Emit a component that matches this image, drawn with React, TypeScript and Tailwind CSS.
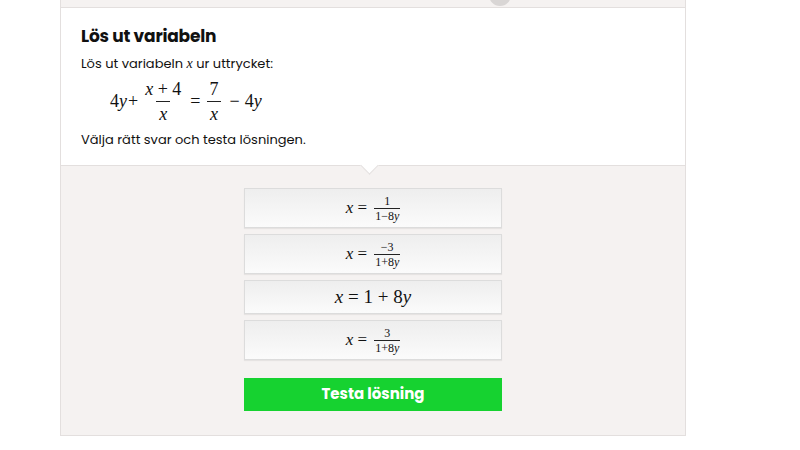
import React from "react";

const MF = "font-['Liberation_Serif','DejaVu_Serif',serif]";

function Frac({ num, den }: { num: React.ReactNode; den: React.ReactNode }) {
  return (
    <span className="inline-flex flex-col items-center align-middle mx-[3px] text-[18px]">
      <span className="px-[3px] leading-none pb-[3px]">{num}</span>
      <span className="px-[3px] leading-none pt-[3px] border-t border-[#222]">{den}</span>
    </span>
  );
}

function SmallFrac({ num, den }: { num: React.ReactNode; den: React.ReactNode }) {
  return (
    <span className="inline-flex flex-col items-center align-middle ml-[7px] text-[12px]">
      <span className="px-[1px] leading-none pb-[1px]">{num}</span>
      <span className="px-[1px] leading-none pt-[1px] border-t border-[#222]">{den}</span>
    </span>
  );
}

const I = ({ children }: { children: React.ReactNode }) => <i className="italic">{children}</i>;

function Option({ children, h }: { children: React.ReactNode; h: string }) {
  return (
    <div
      className={`w-[258px] ${h} flex items-center justify-center border border-[#dcdcdc] bg-gradient-to-b from-[#eeeeee] to-[#fbfbfb] shadow-[0_1px_1px_rgba(0,0,0,0.06)] text-[#111] ${MF}`}
    >
      {children}
    </div>
  );
}

export default function App() {
  return (
    <div className="w-[800px] h-[450px] bg-white overflow-hidden font-['Poppins','Open_Sans',sans-serif] text-[#111]">
      <div className="ml-[60px] w-[626px] border-x border-b border-[#e3dfde]">
        <div className="relative h-[8px] bg-[#f5f2f1] border-b border-[#e3dfde] overflow-hidden">
          <div className="absolute left-[428px] top-[-16px] w-[22px] h-[22px] rounded-full bg-[#d9d6d5]" />
        </div>
        <div className="px-[20px] pt-[15px] pb-[16px] bg-white">
          <div className="text-[17px] font-bold leading-[26px] tracking-[-0.2px]">Lös ut variabeln</div>
          <div className="mt-[6px] text-[13px] leading-[18px]">
            Lös ut variabeln <span className={`${MF} italic text-[14px]`}>x</span> ur uttrycket:
          </div>
          <div className={`${MF} text-[18px] flex items-center h-[44px] mt-[6px] pl-[29px]`}>
            <span>4<I>y</I></span>
            <span className="mx-[1px]">+</span>
            <Frac num={<><I>x</I> + 4</>} den={<I>x</I>} />
            <span className="mx-[3px]">=</span>
            <Frac num="7" den={<I>x</I>} />
            <span className="mx-[5px]">−</span>
            <span>4<I>y</I></span>
          </div>
          <div className="mt-[8px] text-[13px] leading-[18px]">Välja rätt svar och testa lösningen.</div>
        </div>
        <div className="relative bg-[#f5f2f1] border-t border-[#e3dfde] pt-[22px] pb-[24px] flex flex-col items-center gap-[6px]">
          <div className="absolute left-[302px] top-[-7px] w-[13px] h-[13px] rotate-45 bg-white border-r border-b border-[#e3dfde]" />
          <Option h="h-[40px]">
            <span className="text-[17px]"><I>x</I> =</span>
            <SmallFrac num="1" den={<>1−8<I>y</I></>} />
          </Option>
          <Option h="h-[40px]">
            <span className="text-[17px]"><I>x</I> =</span>
            <SmallFrac num="−3" den={<>1+8<I>y</I></>} />
          </Option>
          <Option h="h-[34px]">
            <span className="text-[19px]"><I>x</I> = 1 + 8<I>y</I></span>
          </Option>
          <Option h="h-[40px]">
            <span className="text-[17px]"><I>x</I> =</span>
            <SmallFrac num="3" den={<>1+8<I>y</I></>} />
          </Option>
          <button className="mt-[12px] w-[258px] h-[33px] bg-[#16d230] text-white text-[15px] font-bold flex items-center justify-center">
            Testa lösning
          </button>
        </div>
      </div>
    </div>
  );
}
